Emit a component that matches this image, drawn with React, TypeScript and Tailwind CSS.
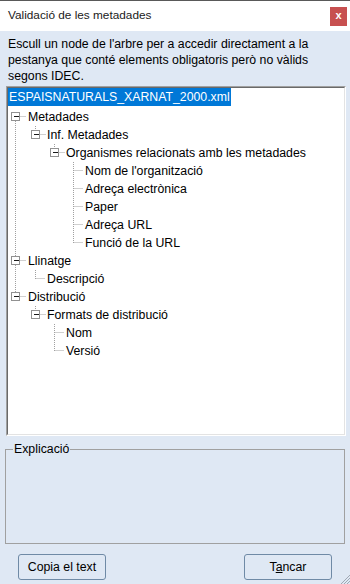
const rows: { label: string; level: number; box?: boolean }[] = [
  { label: 'Metadades', level: 1, box: true },
  { label: 'Inf. Metadades', level: 2, box: true },
  { label: 'Organismes relacionats amb les metadades', level: 3, box: true },
  { label: "Nom de l'organització", level: 4 },
  { label: 'Adreça electrònica', level: 4 },
  { label: 'Paper', level: 4 },
  { label: 'Adreça URL', level: 4 },
  { label: 'Funció de la URL', level: 4 },
  { label: 'Llinatge', level: 1, box: true },
  { label: 'Descripció', level: 2 },
  { label: 'Distribució', level: 1, box: true },
  { label: 'Formats de distribució', level: 2, box: true },
  { label: 'Nom', level: 3 },
  { label: 'Versió', level: 3 },
];

const textLeft: Record<number, string> = {
  1: 'pl-[20px]',
  2: 'pl-[39px]',
  3: 'pl-[58px]',
  4: 'pl-[77px]',
};

// rows after the root start at y=20, 18px each
const cy = (i: number) => 20 + 18 * (i - 1) + 9;
const top = (i: number) => 20 + 18 * (i - 1);
const levelX: Record<number, number> = { 1: 7.5, 2: 27.5, 3: 46.5, 4: 65.5 };

const TreeLines = () => {
  const dot = { stroke: '#a0a0a0', strokeWidth: 1, strokeDasharray: '1 1' };
  const v = (x: number, y1: number, y2: number, k: string) => (
    <line key={k} x1={x} x2={x} y1={y1} y2={y2} {...dot} />
  );
  const h = (x1: number, x2: number, y: number, k: string) => (
    <line key={k} x1={x1} x2={x2} y1={y + 0.5} y2={y + 0.5} {...dot} />
  );
  const lines = [
    v(levelX[1], cy(1), cy(11), 'v1'),
    v(levelX[2], top(2), cy(2), 'v2'),
    v(levelX[3], top(3), cy(3), 'v3'),
    v(levelX[4], top(4), cy(8), 'v4'),
    v(levelX[2], top(10), cy(10), 'v5'),
    v(levelX[2], top(12), cy(12), 'v6'),
    v(levelX[3], top(13), cy(14), 'v7'),
  ];
  rows.forEach((r, idx) => {
    const i = idx + 1;
    const x = levelX[r.level];
    if (r.box) lines.push(h(x + 5, x + 10, cy(i) - 1, 'h' + i));
    else lines.push(h(x, x + 10, cy(i) - 1, 'h' + i));
  });
  return (
    <svg className="absolute left-0 top-0 pointer-events-none" width="200" height="280">
      {lines}
      {rows.map((r, idx) => {
        if (!r.box) return null;
        const x = levelX[r.level];
        const y = cy(idx + 1) - 0.5;
        return (
          <g key={'b' + idx}>
            <rect x={x - 4} y={y - 4} width="8" height="8" fill="#fff" stroke="#919191" shapeRendering="crispEdges" />
            <line x1={x - 2} x2={x + 3} y1={y} y2={y} stroke="#1a1a1a" shapeRendering="crispEdges" />
          </g>
        );
      })}
    </svg>
  );
};

const App = () => {
  return (
    <div
      className="w-[350px] h-[584px] bg-[#dfe8f4] flex flex-col border-t border-[#595959] text-[12.3px] text-black overflow-hidden"
      style={{ fontFamily: '"Liberation Sans", Arial, sans-serif' }}
    >
      <div className="h-[30px] bg-white flex items-center justify-between pl-2 pr-[3px]">
        <span className="text-[#1a1a1a] text-[11.8px]">Validació de les metadades</span>
        <div className="w-[17px] h-[19px] bg-[#c75050] text-white text-[11px] font-bold flex items-center justify-center leading-none pb-[2px]">
          x
        </div>
      </div>

      <p className="px-2 pt-[5px] leading-[16px]">
        Escull un node de l'arbre per a accedir directament a la pestanya que conté elements obligatoris però no vàlids
        segons IDEC.
      </p>

      <div className="mt-[2px] ml-[6px] mr-[4px] h-[350px] border-t border-l border-t-[#a0a0a0] border-l-[#a0a0a0] border-r border-b border-r-white border-b-white">
        <div className="h-full border-t border-l border-t-[#696969] border-l-[#696969] border-r border-b border-r-[#e3e3e3] border-b-[#e3e3e3] bg-white">
          <div className="relative">
            <TreeLines />
            <div className="h-[20px]">
              <span className="inline-block h-[18px] leading-[18px] px-[1px] bg-[#0078d7] text-white">
                ESPAISNATURALS_XARNAT_2000.xml
              </span>
            </div>
            {rows.map((r, idx) => (
              <div key={idx} className={`h-[18px] leading-[18px] whitespace-nowrap ${textLeft[r.level]}`}>
                {r.label}
              </div>
            ))}
          </div>
        </div>
      </div>

      <fieldset className="mt-[5px] ml-[5px] mr-[5px] h-[103px] border border-[#a0a0a0] px-0">
        <legend className="ml-[7px] px-[1px] leading-[16px]">Explicació</legend>
      </fieldset>

      <div className="mt-[10px] flex items-start justify-between pl-[18px] pr-[18px] relative flex-1">
        <button className="w-[88px] h-[26px] rounded-[3px] border border-[#6f8aa6] bg-[#dfe8f4]">Copia el text</button>
        <button className="w-[88px] h-[26px] rounded-[3px] border border-[#6f8aa6] bg-[#dfe8f4]">
          T<span className="underline">a</span>ncar
        </button>
        <svg className="absolute right-0 bottom-0" width="12" height="12">
          {[3, 6, 9].map((o) => (
            <line key={o} x1={12} y1={12 - o} x2={12 - o} y2={12} stroke="#a0a8b4" />
          ))}
        </svg>
      </div>
    </div>
  );
};

export default App;
